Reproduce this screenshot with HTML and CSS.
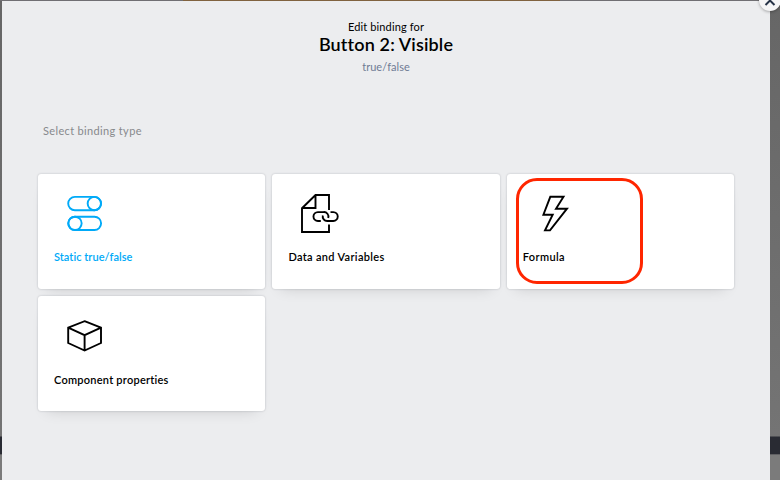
FILE: index.html
```html
<!DOCTYPE html>
<html lang="en">
<head>
<meta charset="utf-8">
<title>Edit binding</title>
<link rel="stylesheet" href="styles.css">
</head>
<body>
<main class="modal">
  <header class="header">
    <div class="eyebrow">Edit binding for</div>
    <h1 class="title">Button 2: Visible</h1>
    <div class="type">true/false</div>
  </header>
  <p class="prompt">Select binding type</p>
  <section class="grid">
    <article class="card selected">
      <svg class="icon" viewBox="60 190 50 50"><rect x="68.2" y="196.9" width="32.9" height="13.3" rx="6.65"/><circle cx="94.3" cy="203.55" r="6.65"/><rect x="68.2" y="216.7" width="32.9" height="13.3" rx="6.65"/><circle cx="75" cy="223.35" r="6.65"/></svg>
      <span class="label">Static true/false</span>
    </article>
    <article class="card">
      <svg class="icon" viewBox="294 190 50 50"><path d="M329 210V195H315.5L302 208.2V232H329V224.500M302 208H315.5V195"/><path d="M320.8 221H317.900A4.450 4.450 0 0 1 317.900 212.100H323.500A4.500 4.500 0 0 1 328.200 218M330.500 212.100H333.300A4.450 4.450 0 0 1 333.300 221H327.300A4.500 4.500 0 0 1 322.800 215.500"/></svg>
      <span class="label data">Data and Variables</span>
    </article>
    <article class="card">
      <svg class="icon" viewBox="529 190 50 50"><path d="M550.3 196.8H563.500L556 208.700H567L550 230.400H545L552.700 214.700H543.400Z"/></svg>
      <span class="label formula">Formula</span>
      <span class="highlight"></span>
    </article>
    <article class="card">
      <svg class="icon" viewBox="60 312 50 50"><path d="M84.600 321.200L101 327.700V343L84.600 350.500L68.200 343V327.700ZM68.200 327.700L84.600 335.200L101 327.700M84.600 335.200V350.500"/></svg>
      <span class="label component">Component properties</span>
    </article>
  </section>
  <button class="close" aria-label="Close"><svg viewBox="0 0 22 22"><path d="M6.5 7L15.5 16M15.5 7L6.5 16"/></svg></button>
</main>
</body>
</html>
```
FILE: styles.css
```css
* { box-sizing: border-box; }
body {
  margin: 0;
  height: 480px;
  padding: 1px 10px 0 2px;
  overflow: hidden;
  font-family: Lato, "Liberation Sans", sans-serif;
  font-variant-ligatures: none;
  color: #000;
  background:
    linear-gradient(90deg, #706f73 183px, #80623f 183px, #80623f 560px, #706f73 560px) 0 0 / 100% 1px no-repeat,
    linear-gradient(#666 0, #747474 436px, #292b33 437px, #292b33 454px, #606063 454px, #606063 455px, #7b7b7b 455px);
}
.modal {
  position: relative;
  height: 479px;
  padding: 18px 36px 0;
  background: #ecedef;
}
.header { text-align: center; height: 102px; }
.eyebrow { font-size: 11px; line-height: 15px; letter-spacing: .14px; }
.title { margin: 0; font-size: 18px; line-height: 20px; font-weight: 600; letter-spacing: .15px; }
.type { margin-top: 5px; font-size: 11px; line-height: 15px; letter-spacing: .05px; color: #6f7b94; }
.prompt { margin: 2px 0 0 5px; height: 51px; font-size: 11px; line-height: 16px; letter-spacing: .35px; color: #87898c; }
.grid { display: grid; grid-template-columns: repeat(3, 227.4px); grid-auto-rows: 115px; gap: 7px 7px; }
.card {
  position: relative;
  display: flex;
  flex-direction: column;
  padding: 16px;
  background: #fff;
  border-radius: 3px;
  box-shadow: 0 0 2px rgba(45, 55, 70, .3), 0 8px 14px -9px rgba(0, 0, 0, .16);
}
.icon {
  width: 50px;
  height: 50px;
  margin-left: 6px;
  fill: none;
  stroke: currentColor;
  stroke-width: 1.9;
}
.label { margin-top: 9px; font-size: 11px; line-height: 16px; font-weight: 600; letter-spacing: .04px; white-space: nowrap; }
.data { letter-spacing: .33px; }
.formula { letter-spacing: .35px; }
.component { margin-top: 10px; letter-spacing: .24px; }
.selected { color: #00aaf8; }
.highlight {
  position: absolute;
  left: 9.2px;
  top: 4px;
  width: 127px;
  height: 106px;
  border: 3px solid #ff2600;
  border-radius: 21px;
}
.close {
  position: absolute;
  right: -11px;
  top: -12px;
  width: 22px;
  height: 22px;
  padding: 0;
  border: 0;
  border-radius: 50%;
  background: #f5f5f6;
  box-shadow: 0 1px 3px rgba(0, 0, 0, .3);
}
.close svg { display: block; fill: none; stroke: #263347; stroke-width: 2; }
```
